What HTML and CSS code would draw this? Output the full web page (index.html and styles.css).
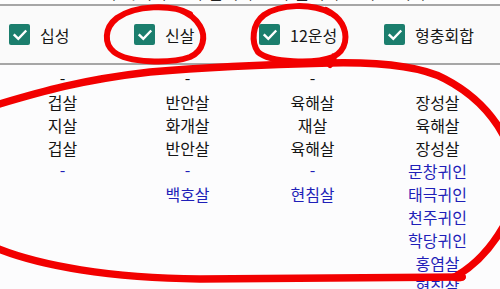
FILE: index.html
```html
<!DOCTYPE html>
<html lang="ko">
<head>
<meta charset="utf-8">
<link rel="stylesheet" href="styles.css">
</head>
<body>
<div class="page">
  <div class="topstrip"><span class="cut">(시주)　(일주)　(월주)　(년주)</span></div>
  <div class="rule"></div>
  <div class="checks">
    <label class="check"><span class="box"><svg viewBox="0 0 20 20" width="20" height="20"><path d="M4.6 10.2 L8.3 13.8 L15.4 6.4" fill="none" stroke="#fff" stroke-width="2.4" stroke-linecap="square"/></svg></span><span>십성</span></label>
    <label class="check"><span class="box"><svg viewBox="0 0 20 20" width="20" height="20"><path d="M4.6 10.2 L8.3 13.8 L15.4 6.4" fill="none" stroke="#fff" stroke-width="2.4" stroke-linecap="square"/></svg></span><span>신살</span></label>
    <label class="check"><span class="box"><svg viewBox="0 0 20 20" width="20" height="20"><path d="M4.6 10.2 L8.3 13.8 L15.4 6.4" fill="none" stroke="#fff" stroke-width="2.4" stroke-linecap="square"/></svg></span><span>12운성</span></label>
    <label class="check"><span class="box"><svg viewBox="0 0 20 20" width="20" height="20"><path d="M4.6 10.2 L8.3 13.8 L15.4 6.4" fill="none" stroke="#fff" stroke-width="2.4" stroke-linecap="square"/></svg></span><span>형충회합</span></label>
  </div>
  <div class="rule"></div>
  <div class="table">
    <div class="col">
      <div>-</div><div>겁살</div><div>지살</div><div>겁살</div>
      <div class="blue">-</div>
    </div>
    <div class="col">
      <div>-</div><div>반안살</div><div>화개살</div><div>반안살</div>
      <div class="blue">-</div><div class="blue">백호살</div>
    </div>
    <div class="col">
      <div>-</div><div>육해살</div><div>재살</div><div>육해살</div>
      <div class="blue">-</div><div class="blue">현침살</div>
    </div>
    <div class="col">
      <div>&nbsp;</div><div>장성살</div><div>육해살</div><div>장성살</div>
      <div class="blue">문창귀인</div><div class="blue">태극귀인</div><div class="blue">천주귀인</div><div class="blue">학당귀인</div><div class="blue">홍염살</div><div class="blue">현침살</div>
    </div>
  </div>
  <svg class="marks" viewBox="0 0 500 289" width="500" height="289">
    <g fill="none" stroke="#f20000" stroke-linecap="round" stroke-linejoin="round">
      <path stroke-width="6" d="M190 14 C172 4 135 5 117 18 C104 28 104 44 114 52 C128 63 170 64 190 57 C204 51 206 36 200 26 C196 19 188 13 180 10"/>
      <path stroke-width="6" d="M330 13 C312 3 280 4 264 15 C252 24 251 42 258 52 C270 63 315 64 333 57 C347 50 348 35 342 24 C338 17 332 13 326 10 M334 56 C334 60 332 62 330 65"/>
      <path stroke-width="7.5" d="M-4 105 C40 92 80 80 150 72 C220 66 290 64 330 63 C380 62 420 66 445 79 C470 92 492 112 506 140"/>
      <path stroke-width="7.5" d="M506 222 C494 244 480 262 458 275"/>
      <path stroke-width="7.5" d="M-4 248 C40 266 110 278 200 279 L462 277"/>
      <ellipse cx="458" cy="277" rx="8" ry="4.5" fill="#f20000" stroke="none"/>
    </g>
  </svg>
</div>
</body>
</html>
```

FILE: styles.css
```css
html, body {
  margin: 0;
  padding: 0;
  background: #fcfcfd;
}

.page {
  position: relative;
  width: 500px;
  height: 289px;
  overflow: hidden;
  font-family: "Noto Sans CJK KR", "Noto Sans", sans-serif;
  color: #141414;
}

.topstrip {
  height: 4px;
  overflow: hidden;
  background: #fdfdfd;
  position: relative;
}

.cut {
  display: block;
  margin-top: -19px;
  padding-left: 110px;
  font-size: 16px;
  line-height: 22px;
  letter-spacing: 6px;
  color: #222;
}

.rule {
  height: 2px;
  background: #a6a6a6;
}

.checks {
  display: grid;
  grid-template-columns: repeat(4, 1fr);
  height: 57px;
  background: #fafafa;
}

.check {
  display: flex;
  align-items: center;
  gap: 10px;
  padding-left: 9px;
  font-size: 16px;
  color: #161616;
}

.box {
  width: 21px;
  height: 21px;
  border-radius: 2px;
  background: #1b7e6d;
  display: flex;
  align-items: center;
  justify-content: center;
}

.box svg {
  display: block;
}

.table {
  display: grid;
  grid-template-columns: repeat(4, 1fr);
  padding-top: 3px;
  font-size: 16px;
  line-height: 23px;
  text-align: center;
}

.blue {
  color: #1f1fb8;
}

.marks {
  position: absolute;
  left: 0;
  top: 0;
  pointer-events: none;
}
```
